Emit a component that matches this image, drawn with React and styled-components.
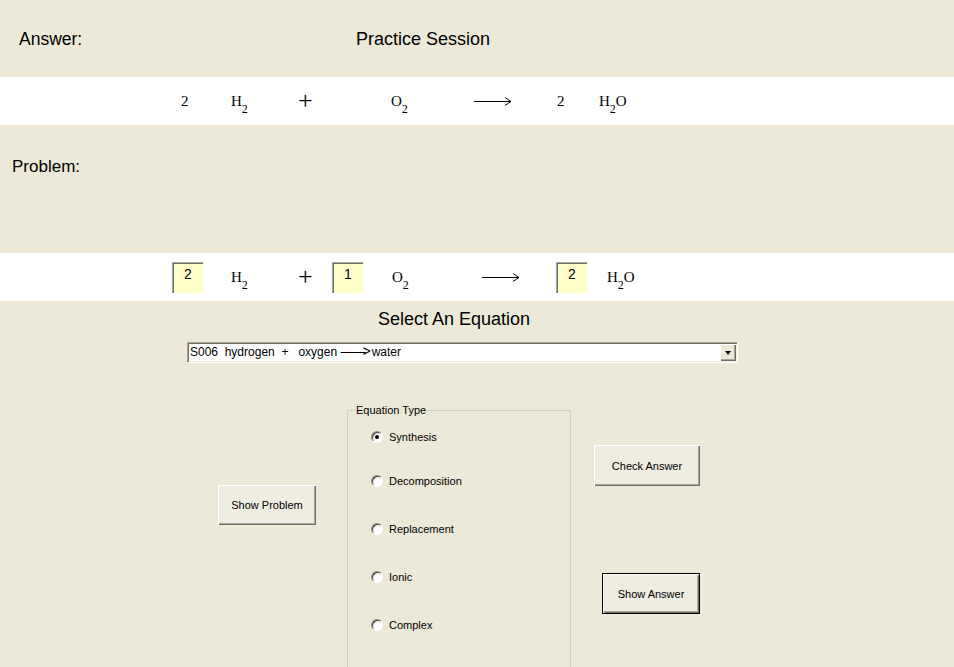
import React from "react";
import styled, { createGlobalStyle } from "styled-components";

const GlobalStyle = createGlobalStyle`
  html, body {
    margin: 0;
    padding: 0;
    background: #ece9d8;
    overflow: hidden;
  }
  body {
    font-family: "Liberation Sans", Arial, sans-serif;
    color: #000;
  }
`;

const Page = styled.div`
  width: 954px;
  height: 667px;
  display: flex;
  flex-direction: column;
  background: #ece9d8;
`;

const Header = styled.div`
  height: 77px;
  display: flex;
  align-items: center;
  padding-left: 19px;
  box-sizing: border-box;
  flex: none;
`;

const Heading = styled.div`
  font-size: ${p => p.$size || 17}px;
  width: ${p => (p.$w ? p.$w + "px" : "auto")};
  line-height: 20px;
  flex: none;
`;

const ProblemArea = styled.div`
  height: 128px;
  box-sizing: border-box;
  padding: 32px 0 0 12px;
  flex: none;
`;

const Band = styled.div`
  height: 48px;
  background: #fff;
  display: flex;
  align-items: center;
  padding-left: ${p => p.$left}px;
  flex: none;
`;

const Slot = styled.div`
  width: ${p => p.$w}px;
  flex: none;
  display: flex;
  align-items: center;
`;

const Chem = styled.span`
  font-family: "Liberation Serif", "Times New Roman", serif;
  font-size: 15px;
  line-height: 16px;
  white-space: nowrap;
`;

const Sub = styled.sub`
  font-size: 12px;
  line-height: 0;
  vertical-align: -7px;
`;

const Plus = styled.span`
  font-family: "Liberation Serif", "Times New Roman", serif;
  font-size: 26px;
  line-height: 16px;
`;

const CoefBox = styled.div`
  width: 31px;
  height: 31px;
  box-sizing: border-box;
  background: #ffffcc;
  border-top: 1px solid #aca899;
  border-left: 1px solid #aca899;
  box-shadow: inset 1px 1px #716f64;
  font-size: 14px;
  line-height: 16px;
  text-align: center;
  padding-top: 3px;
`;

const SelectTitle = styled.div`
  margin: 8px 0 0 378px;
  font-size: 18px;
  line-height: 20px;
`;

const Combo = styled.div`
  margin: 13px 0 0 187px;
  width: 551px;
  height: 21px;
  box-sizing: border-box;
  background: #fff;
  border: 1px solid;
  border-color: #aca899 #fff #fff #aca899;
  box-shadow: inset 1px 1px #716f64, inset -1px -1px #f1efe2;
  display: flex;
  align-items: center;
  flex: none;
`;

const ComboText = styled.div`
  flex: 1;
  font-size: 12px;
  line-height: 15px;
  padding-left: 2px;
  white-space: pre;
`;

const ComboArrow = styled.span`
  font-size: 14px;
  line-height: 0;
  letter-spacing: -3px;
  margin-right: 4px;
`;

const ComboButton = styled.div`
  width: 16px;
  height: 17px;
  margin-right: 1px;
  box-sizing: border-box;
  background: #ece9d8;
  box-shadow: inset 1px 1px #fff, inset -1px -1px #716f64, inset -2px -2px #aca899;
  display: flex;
  align-items: center;
  justify-content: center;

  &::after {
    content: "";
    border-left: 3px solid transparent;
    border-right: 3px solid transparent;
    border-top: 4px solid #000;
  }
`;

const BottomRow = styled.div`
  display: flex;
  align-items: flex-start;
  margin-top: 41px;
  padding-left: 218px;
`;

const Column = styled.div`
  display: flex;
  flex-direction: column;
  align-items: flex-start;
  flex: none;
  margin-left: ${p => p.$ml || 0}px;
  padding-top: ${p => p.$pt || 0}px;
`;

const Button = styled.button`
  width: ${p => p.$w}px;
  height: ${p => p.$h}px;
  margin: ${p => p.$mt || 0}px 0 0 ${p => p.$ml || 0}px;
  padding: 0;
  box-sizing: border-box;
  font-family: "Liberation Sans", Arial, sans-serif;
  font-size: 11px;
  color: #000;
  background: #efede2;
  border: ${p => (p.$default ? "1px solid #000" : "none")};
  box-shadow: inset 1px 1px #fff, inset -1px -1px #716f64, inset -2px -2px #aca899;
  cursor: default;
`;

const Group = styled.fieldset`
  margin: 0 0 0 31px;
  padding: 0;
  width: 224px;
  height: 300px;
  box-sizing: border-box;
  border: 1px solid #d0d0bf;
  flex: none;
`;

const Legend = styled.legend`
  margin-left: 7px;
  padding: 0 1px;
  font-size: 11px;
  line-height: 13px;
`;

const RadioList = styled.div`
  display: flex;
  flex-direction: column;
  padding: 13px 0 0 23px;
`;

const RadioRow = styled.label`
  display: flex;
  align-items: center;
  gap: 6px;
  height: 14px;
  margin-top: ${p => p.$mt || 0}px;
  font-size: 11px;
  line-height: 14px;
`;

const RadioCircle = styled.span`
  width: 12px;
  height: 12px;
  box-sizing: border-box;
  border-radius: 50%;
  border: 1px solid;
  border-color: #8e8c80 #fff #fff #8e8c80;
  box-shadow: inset 1px 1px #404040;
  background: radial-gradient(circle at 60% 60%, #ffffff 35%, #e4e1d4 100%);
  display: flex;
  align-items: center;
  justify-content: center;
  flex: none;

  &::after {
    content: "";
    width: 4px;
    height: 4px;
    border-radius: 50%;
    background: ${p => (p.$checked ? "#000" : "transparent")};
  }
`;

const Arrow = () => (
  <svg width="38" height="10" viewBox="0 0 38 10">
    <path d="M0 5.5H36.5M31 1.5L37 5.5L31 9.5" stroke="#000" strokeWidth="1" fill="none" />
  </svg>
);

const Formula = ({ parts }) => (
  <Chem>
    {parts.map(([text, sub], i) => (
      <React.Fragment key={i}>
        {text}
        {sub && <Sub>{sub}</Sub>}
      </React.Fragment>
    ))}
  </Chem>
);

const types = ["Synthesis", "Decomposition", "Replacement", "Ionic", "Complex"];

export default function App() {
  return (
    <Page>
      <GlobalStyle />
      <Header>
        <Heading $w={337} $size={17.5}>Answer:</Heading>
        <Heading $size={18}>Practice Session</Heading>
      </Header>

      <Band $left={181}>
        <Slot $w={50}><Chem>2</Chem></Slot>
        <Slot $w={67}><Formula parts={[["H", "2"]]} /></Slot>
        <Slot $w={93}><Plus>+</Plus></Slot>
        <Slot $w={83}><Formula parts={[["O", "2"]]} /></Slot>
        <Slot $w={83}><Arrow /></Slot>
        <Slot $w={42}><Chem>2</Chem></Slot>
        <Slot $w={60}><Formula parts={[["H", "2"], ["O"]]} /></Slot>
      </Band>

      <ProblemArea>
        <Heading>Problem:</Heading>
      </ProblemArea>

      <Band $left={172}>
        <Slot $w={59}><CoefBox>2</CoefBox></Slot>
        <Slot $w={67}><Formula parts={[["H", "2"]]} /></Slot>
        <Slot $w={34}><Plus>+</Plus></Slot>
        <Slot $w={60}><CoefBox>1</CoefBox></Slot>
        <Slot $w={90}><Formula parts={[["O", "2"]]} /></Slot>
        <Slot $w={74}><Arrow /></Slot>
        <Slot $w={51}><CoefBox>2</CoefBox></Slot>
        <Slot $w={60}><Formula parts={[["H", "2"], ["O"]]} /></Slot>
      </Band>

      <SelectTitle>Select An Equation</SelectTitle>
      <Combo>
        <ComboText>
          {"S006  hydrogen  +   oxygen "}
          <ComboArrow>{"\u2014\u2014>"}</ComboArrow>
          {"water"}
        </ComboText>
        <ComboButton />
      </Combo>

      <BottomRow>
        <Column $pt={81}>
          <Button $w={98} $h={40}>Show Problem</Button>
        </Column>
        <Group>
          <Legend>Equation Type</Legend>
          <RadioList>
            {types.map((t, i) => (
              <RadioRow key={t} $mt={i === 0 ? 0 : i === 1 ? 30 : 34}>
                <RadioCircle $checked={i === 0} />
                {t}
              </RadioRow>
            ))}
          </RadioList>
        </Group>
        <Column $ml={23} $pt={41}>
          <Button $w={106} $h={41}>Check Answer</Button>
          <Button $w={98} $h={41} $mt={87} $ml={8} $default>Show Answer</Button>
        </Column>
      </BottomRow>
    </Page>
  );
}
